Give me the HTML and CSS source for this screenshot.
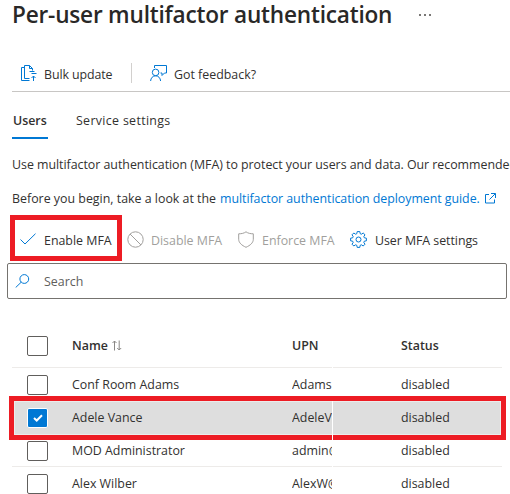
FILE: index.html
```html
<!DOCTYPE html>
<html lang="en">
<head>
<meta charset="utf-8">
<title>Per-user multifactor authentication</title>
<link rel="stylesheet" href="styles.css">
</head>
<body>
<header class="title-bar">
  <h1>Per-user multifactor authentication</h1>
  <span class="more"><i></i><i></i><i></i></span>
</header>

<div class="toolbar">
  <span class="command bulk">
    <svg width="16" height="17" viewBox="0 0 16 17"><path d="M3.500 13.500V.5h5l3 3v2M8.500.5v3h3M3.500 2.500h-3v13h8M3.500 13.500h5M8.500 6.500h5M10.500 8.500h5M12.500 16v-5M10.500 13l2-2 2 2"/></svg>
    <span class="label">Bulk update</span>
  </span>
  <span class="divider"></span>
  <span class="command feedback">
    <svg width="17" height="17" viewBox="0 0 17 17"><path d="M4.500 3V.5h12v7.500h-2l-2.500 2.500V8h-1.500M.6 16c.2-3 2.200-5.200 5-5.200s4.800 2.200 5 5.200"/><circle cx="5.600" cy="7.400" r="3.300"/></svg>
    <span class="label">Got feedback?</span>
  </span>
</div>

<nav class="tabs">
  <span class="tab active">Users</span>
  <span class="tab service">Service settings</span>
</nav>

<p class="intro">Use multifactor authentication (MFA) to protect your users and data. Our recommended</p>
<p class="guide"><span class="lead">Before you begin, take a look at the</span><a class="link">multifactor authentication deployment guide.</a>
  <svg width="11" height="11" viewBox="0 0 11 11"><path d="M4 1.500H.5v8.500h9V6.500M6 .5h4.500V5M10.300.7L4.500 6.500"/></svg></p>

<div class="actions">
  <span class="action enable">
    <svg width="16" height="12" viewBox="0 0 16 12"><path d="M.5 6.500l4.500 4.500L15.500.7"/></svg>
    <span class="label">Enable MFA</span>
  </span>
  <span class="action disable muted">
    <svg width="17" height="17" viewBox="0 0 17 17"><circle cx="8.500" cy="8.500" r="7.700"/><path d="M3 3l11 11"/></svg>
    <span class="label">Disable MFA</span>
  </span>
  <span class="action enforce muted">
    <svg width="16" height="17" viewBox="0 0 16 17"><path d="M8 .8c2 1.500 4.500 2 7.300 2v5.500c0 3.500-3 6-7.300 8-4.300-2-7.300-4.500-7.300-8V2.800C3.500 2.800 6 2.300 8 .8z"/></svg>
    <span class="label">Enforce MFA</span>
  </span>
  <span class="action settings">
    <svg width="17" height="17" viewBox="-8.500 -8.500 17 17"><path d="M-1.300-7.900L1.300-7.900L1.700-5.800L2.900-5.300L4.700-6.500L6.500-4.700L5.300-2.900L5.800-1.700L7.900-1.300L7.900 1.300L5.800 1.700L5.300 2.900L6.500 4.700L4.700 6.500L2.900 5.300L1.700 5.800L1.300 7.900L-1.300 7.900L-1.700 5.800L-2.900 5.300L-4.700 6.500L-6.500 4.700L-5.300 2.900L-5.800 1.700L-7.900 1.300L-7.900-1.300L-5.800-1.700L-5.300-2.900L-6.500-4.700L-4.700-6.500L-2.900-5.300L-1.700-5.800z"/><circle r="2.500"/></svg>
    <span class="label">User MFA settings</span>
  </span>
</div>

<div class="search">
  <svg width="15" height="14" viewBox="0 0 15 14"><circle cx="9.300" cy="5" r="4.400"/><path d="M6.200 8.200L.7 13.500"/></svg>
  <span class="label">Search</span>
</div>

<main class="table">
  <div class="row head">
    <span class="pick"><i class="box"></i></span>
    <span class="name">Name <svg width="10" height="11" viewBox="0 0 10 11"><path d="M2.500 10.500V1M.5 3l2-2 2 2M7.200.5V10M5.200 8l2 2 2-2"/></svg></span>
    <span class="upn">UPN</span>
    <span class="gap"></span>
    <span class="status">Status</span>
  </div>
  <div class="row">
    <span class="pick"><i class="box"></i></span>
    <span class="name">Conf Room Adams</span>
    <span class="upn">Adams</span>
    <span class="gap"></span>
    <span class="status">disabled</span>
  </div>
  <div class="row selected">
    <span class="pick"><i class="box checked"><svg width="10" height="8" viewBox="0 0 10 8"><path d="M1 4l2.700 2.500L9 1.200"/></svg></i></span>
    <span class="name">Adele Vance</span>
    <span class="upn">AdeleV</span>
    <span class="gap"></span>
    <span class="status">disabled</span>
  </div>
  <div class="row">
    <span class="pick"><i class="box"></i></span>
    <span class="name">MOD Administrator</span>
    <span class="upn">admin@</span>
    <span class="gap"></span>
    <span class="status">disabled</span>
  </div>
  <div class="row last">
    <span class="pick"><i class="box"></i></span>
    <span class="name">Alex Wilber</span>
    <span class="upn">AlexW@</span>
    <span class="gap"></span>
    <span class="status">disabled</span>
  </div>
</main>
</body>
</html>
```

FILE: styles.css
```css
* { box-sizing: border-box; }
html, body { overflow: hidden; }
body {
  margin: 0;
  width: 510px;
  height: 494px;
  background: #fff;
  color: #323130;
  font: 12.4px/18px "Open Sans", "Noto Sans", sans-serif;
  white-space: nowrap;
}
svg { display: block; flex: none; fill: none; stroke: #0078d4; stroke-width: 1; }
i { display: block; }

.title-bar { display: flex; height: 58px; padding-left: 12px; }
h1 { margin: 0; width: 406px; font-size: 22.6px; line-height: 30px; font-weight: 600; letter-spacing: -.2px; color: #292827; }
.more { display: flex; gap: 3px; padding: 14px 0 0 1px; }
.more i { width: 2px; height: 2px; background: #797775; }

.label { padding-top: 2px; line-height: 18px; }
.toolbar { display: flex; align-items: center; height: 34px; margin-left: 12px; border-bottom: 1px solid #c8c6c4; padding-bottom: 3px; }
.command { display: flex; align-items: center; }
.command .label { padding-top: 3px; }
.bulk { width: 119px; padding-left: 9px; gap: 7px; letter-spacing: -.1px; }
.divider { width: 1px; height: 20px; background: #d2d0ce; }
.feedback { padding-left: 18px; gap: 7px; }

.tabs { display: flex; height: 47px; padding: 20px 0 0 12px; gap: 28px; }
.tab { height: 27px; }
.active { width: 36px; font-weight: 600; border-bottom: 2px solid #0078d4; padding-left: 1px; }
.service { letter-spacing: .33px; }

p { margin: 0; padding-left: 12px; }
.intro { padding-top: 17px; height: 51px; overflow: hidden; letter-spacing: -.03px; }
.guide { display: flex; height: 25px; }
.lead { width: 208px; }
.link { width: 266px; color: #0078d4; letter-spacing: -.05px; }
.guide svg { margin-top: 3px; margin-left: -1px; }

.actions { display: flex; height: 46px; margin-left: 10px; align-items: center; }
.action { display: flex; align-items: center; height: 46px; padding-top: 2px; }
.actions .label { padding-top: 3px; }
.enable { width: 112px; border: 5px solid #ed1c24; padding-left: 5px; gap: 8px; }
.disable { width: 116px; padding-left: 5px; gap: 7px; }
.enforce { width: 112px; gap: 8px; }
.settings { gap: 8px; letter-spacing: -.05px; }
.muted { color: #a19f9d; }
.muted svg { stroke: #a19f9d; }

.search { display: flex; align-items: center; gap: 14px; margin: 2px 0 0 7px; width: 500px; height: 36px; border: 1px solid #75736f; border-radius: 2px; padding-left: 7px; color: #605e5c; }

.table { padding: 25px 8px 0 12px; }
.row { display: grid; grid-template-columns: 60px 220px 40px 1px 68px 1fr; align-items: center; height: 33px; border-bottom: 1px solid #edebe9; }
.row > * { position: relative; top: 1px; }
.row .status { grid-column: 6; }
.head { height: 44px; font-weight: 600; }
.head > * { top: 0; }
.pick { padding-left: 15px; }
.box { width: 21px; height: 20px; border: 1px solid #605e5c; border-radius: 2px; }
.checked { background: #0078d4; border-color: #fff; display: grid; place-items: center; }
.checked svg { stroke: #fff; stroke-width: 2; }
.name { display: flex; align-items: center; gap: 4px; }
.name svg { stroke: #8a8886; }
.upn { overflow: hidden; }
.row .gap { align-self: stretch; top: 0; margin-bottom: -1px; background: #fff; }
.last { border-bottom: 0; }
.last > * { top: 0; }
.selected { height: 44px; margin: -5px -4px -6px -3px; border: 5px solid #ed1c24; position: relative; grid-template-columns: 58px 220px 40px 1px 68px 1fr; background: #dedede; box-shadow: inset 0 0 0 1px #ececec; }
.selected > * { top: 0; }
.selected .pick { padding-left: 13px; }
.selected .gap { margin-bottom: 0; }
```
